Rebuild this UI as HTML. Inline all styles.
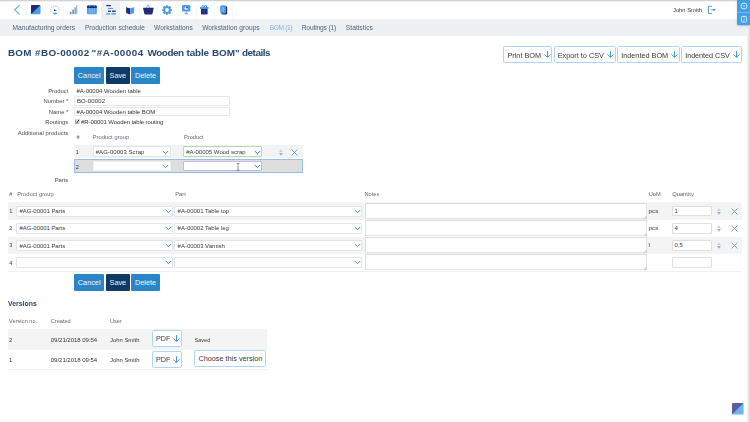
<!DOCTYPE html>
<html>
<head>
<meta charset="utf-8">
<style>
html,body{margin:0;padding:0;}
body{filter:blur(0.3px);width:750px;height:422px;overflow:hidden;background:#fff;position:relative;font-family:"Liberation Sans",sans-serif;color:#333;}
div{box-sizing:border-box;}
.abs{position:absolute;}
.t{position:absolute;white-space:nowrap;line-height:10px;height:10px;}
.btn{position:absolute;height:17px;color:#eef5fc;font-size:7.3px;line-height:17px;text-align:center;border-radius:1px;}
.bl{background:#2b86c8;}
.bd{background:#103a66;}
.obtn{position:absolute;height:17px;border:1px solid #aed5f3;border-radius:1.5px;background:#fff;}
.row{position:absolute;background:#f3f3f3;}
.sel{position:absolute;background:#fff;border:1px solid #d5dbe1;border-radius:1px;}
.ta{position:absolute;background:#fff;border:1px solid #e3e3e3;border-top-color:#dbdbdb;border-left-color:#dedede;}
svg{position:absolute;overflow:visible;}
</style>
</head>
<body>
<div class="abs" style="left:0;top:19.3px;width:750px;height:16.7px;background:#eef1f4"></div>
<div class="abs" style="left:101.3px;top:1px;width:19px;height:19px;background:#eef1f4"></div>
<div class="abs" style="left:0;top:0;width:750px;height:1px;background:#d3d3d3"></div>
<div class="abs" style="left:0;top:1px;width:750px;height:1px;background:#f3f3f3"></div>
<div class="abs" style="left:26.3px;top:2px;width:1px;height:17px;background:#f8f9fa"></div>
<div class="abs" style="left:45.3px;top:2px;width:1px;height:17px;background:#f8f9fa"></div>
<div class="abs" style="left:63.4px;top:2px;width:1px;height:17px;background:#f8f9fa"></div>
<div class="abs" style="left:82.2px;top:2px;width:1px;height:17px;background:#f8f9fa"></div>
<div class="abs" style="left:138.7px;top:2px;width:1px;height:17px;background:#f8f9fa"></div>
<div class="abs" style="left:157.3px;top:2px;width:1px;height:17px;background:#f8f9fa"></div>
<div class="abs" style="left:176.9px;top:2px;width:1px;height:17px;background:#f8f9fa"></div>
<div class="abs" style="left:195.5px;top:2px;width:1px;height:17px;background:#f8f9fa"></div>
<div class="abs" style="left:213.5px;top:2px;width:1px;height:17px;background:#f8f9fa"></div>
<div class="abs" style="left:232px;top:2px;width:1px;height:17px;background:#f8f9fa"></div>
<svg style="left:13px;top:4px" width="8" height="12" viewBox="0 0 8 12"><path d="M6.6 1.2 L1.6 5.8 L6.6 10.4" fill="none" stroke="#5fb0ee" stroke-width="1.1"/></svg>
<svg style="left:31px;top:5px" width="10" height="10" viewBox="0 0 10 10"><defs><clipPath id="lg"><rect x="0" y="0" width="9.5" height="9.3" rx="1.2"/></clipPath></defs><g clip-path="url(#lg)"><rect width="10" height="10" fill="#4a9de8"/><path d="M0 0 H9.5 L0 9.3 Z" fill="#232a7a"/></g></svg>
<svg style="left:49.6px;top:4.6px" width="10" height="10" viewBox="0 0 10 10"><path d="M0.9 6.6 A4.3 4.3 0 1 1 9.1 6.6" fill="none" stroke="#86bdf0" stroke-width="1.1" stroke-dasharray="0.9 1.0"/><path d="M2.5 7.8 H7.5 A2.6 2.2 0 0 1 2.5 7.8Z" fill="#4a9de8"/><path d="M4.0 4.3 L6.9 5.9 H4.0Z" fill="#232a7a"/></svg>
<svg style="left:69px;top:5px" width="9" height="10" viewBox="0 0 9 10"><rect x="0.8" y="6.8" width="1.8" height="2.4" fill="#8a8fa8"/><rect x="3.2" y="4.6" width="1.8" height="4.6" fill="#8f96b8"/><rect x="5.4" y="2.2" width="1.8" height="7" fill="#8fa4d0"/><rect x="7" y="0.2" width="1.4" height="9" fill="#9cc4ee"/></svg>
<svg style="left:87.3px;top:5.2px" width="10" height="10" viewBox="0 0 10 10"><rect x="0" y="0.6" width="9.8" height="8.6" rx="1" fill="#4a9de8"/><path d="M0 2.9 V1.6 A1 1 0 0 1 1 0.6 H8.8 A1 1 0 0 1 9.8 1.6 V2.9Z" fill="#232a7a"/><rect x="2" y="0" width="1.2" height="1.8" fill="#4a9de8"/><rect x="6.6" y="0" width="1.2" height="1.8" fill="#4a9de8"/><g stroke="#a9d3f8" stroke-width="0.6"><path d="M2.2 3.6V8.6M4 3.6V8.6M5.8 3.6V8.6M7.6 3.6V8.6"/></g></svg>
<svg style="left:106px;top:4px" width="11" height="12" viewBox="0 0 11 12"><rect x="0.3" y="1" width="4.6" height="1.2" fill="#232a7a"/><rect x="2" y="3.9" width="5" height="1.1" fill="#4a9de8"/><rect x="2" y="6.6" width="3" height="1.3" fill="#232a7a"/><rect x="6" y="6.6" width="3.8" height="1.3" fill="#232a7a"/><rect x="0.3" y="9.2" width="3.8" height="1.4" fill="#4a9de8"/><rect x="5.4" y="9.2" width="4.4" height="1.4" fill="#4a9de8"/></svg>
<svg style="left:125.5px;top:6px" width="9" height="9" viewBox="0 0 9 9"><path d="M0.1 1 L4.1 2.3 V8.5 L0.1 6.9Z" fill="#232a7a"/><path d="M8.1 1 L4.1 2.3 V8.5 L8.1 6.9Z" fill="#4a9de8"/><path d="M0.1 1 L4.1 -0.1 L8.1 1 L4.1 2.3Z" fill="#f3f6fb"/></svg>
<svg style="left:143.3px;top:4.4px" width="11" height="11" viewBox="0 0 11 11"><path d="M3.2 4.2 L5.2 0.9 L7.2 4.2" fill="none" stroke="#4a9de8" stroke-width="0.8"/><path d="M0.5 3.7 H10.3 Q10.8 3.7 10.7 4.3 L9.5 9.4 Q9.3 10.4 8.3 10.4 H2.5 Q1.5 10.4 1.3 9.4 L0.1 4.3 Q0 3.7 0.5 3.7Z" fill="#232a7a"/></svg>
<svg style="left:162px;top:5px" width="10" height="10" viewBox="-5 -5 10 10"><circle r="3.7" fill="#4a9de8"/><rect x="-1.1" y="-4.8" width="2.2" height="2.2" rx="0.4" transform="rotate(0)" fill="#4a9de8"/><rect x="-1.1" y="-4.8" width="2.2" height="2.2" rx="0.4" transform="rotate(45)" fill="#4a9de8"/><rect x="-1.1" y="-4.8" width="2.2" height="2.2" rx="0.4" transform="rotate(90)" fill="#4a9de8"/><rect x="-1.1" y="-4.8" width="2.2" height="2.2" rx="0.4" transform="rotate(135)" fill="#4a9de8"/><rect x="-1.1" y="-4.8" width="2.2" height="2.2" rx="0.4" transform="rotate(180)" fill="#4a9de8"/><rect x="-1.1" y="-4.8" width="2.2" height="2.2" rx="0.4" transform="rotate(225)" fill="#4a9de8"/><rect x="-1.1" y="-4.8" width="2.2" height="2.2" rx="0.4" transform="rotate(270)" fill="#4a9de8"/><rect x="-1.1" y="-4.8" width="2.2" height="2.2" rx="0.4" transform="rotate(315)" fill="#4a9de8"/><circle r="1.9" fill="#fff"/></svg>
<svg style="left:181.6px;top:5.2px" width="9" height="10" viewBox="0 0 9 10"><rect x="0" y="0" width="8.4" height="6.6" rx="0.8" fill="#4a9de8"/><rect x="3.8" y="6.6" width="0.9" height="2" fill="#4a9de8"/><rect x="2.4" y="8.5" width="3.6" height="0.7" fill="#4a6cc0"/><circle cx="4.25" cy="3.2" r="1.7" fill="#f7efc0"/><path d="M4.25 3.2 V1.5 A1.7 1.7 0 0 1 5.95 3.2Z" fill="#232a7a"/></svg>
<svg style="left:200.4px;top:5px" width="9" height="10" viewBox="0 0 9 10"><path d="M4.3 2.3 C3.9 -0.2 1.6 -0.2 2.1 2.3 M4.3 2.3 C4.7 -0.2 7 -0.2 6.5 2.3" fill="none" stroke="#4a9de8" stroke-width="1.05"/><rect x="0" y="2" width="8.6" height="1.9" rx="0.3" fill="#4a9de8"/><rect x="1" y="3.9" width="6.6" height="5.5" fill="#232a7a"/><rect x="3.8" y="3.9" width="1" height="5.5" fill="#36429a"/></svg>
<svg style="left:220px;top:5px" width="8" height="10" viewBox="0 0 8 10"><rect x="1.4" y="1" width="5.8" height="8.4" rx="1.5" fill="#232a7a"/><rect x="0.2" y="0.2" width="5.8" height="8.4" rx="1.5" fill="#4a9de8"/><path d="M3.1 2.2 V6.6 M2.3 3.2 H3.9 M2.3 5.4 H3.9" stroke="#a6d0f8" stroke-width="0.55" fill="none"/></svg>
<div class="t" style="left:673px;top:5.00px;font-size:5.8px;color:#333;letter-spacing:0.000px;--k:5.8;">John Smith</div>
<svg style="left:707px;top:5px" width="10" height="10" viewBox="0 0 10 10"><path d="M5 1.3 H1.5 V8.5 H5" fill="none" stroke="#4a82c4" stroke-width="0.85"/><path d="M4.2 4.8 H7.4" stroke="#4a82c4" stroke-width="0.9"/><path d="M6.6 3.4 L8.7 4.8 L6.6 6.2Z" fill="#4a82c4"/></svg>
<div class="abs" style="left:737px;top:0;width:13px;height:25.2px;background:#3fa0e8;border-radius:0 0 0 1.5px;box-shadow:0 1px 2px rgba(0,0,0,0.22)"></div>
<div class="abs" style="left:737px;top:11.9px;width:13px;height:0.8px;background:#6cb8f0"></div>
<svg style="left:739.6px;top:1.7px" width="8" height="8" viewBox="0 0 8 8"><circle cx="4" cy="4" r="3" fill="none" stroke="#d8ecfc" stroke-width="0.95"/><path d="M3.6 2.8 L5 4 L3.6 5.2Z" fill="#d8ecfc"/></svg>
<svg style="left:739.6px;top:14.8px" width="8" height="8" viewBox="0 0 8 8"><rect x="1.4" y="1.4" width="5.2" height="5.6" rx="0.9" fill="none" stroke="#d8ecfc" stroke-width="0.95"/><path d="M2.9 2 H5.1" stroke="#d8ecfc" stroke-width="0.9"/><path d="M3 4.7 L3.8 5.4 L5.1 3.9" stroke="#d8ecfc" stroke-width="0.7" fill="none"/></svg>
<div class="abs" style="left:747.4px;top:26px;width:2.6px;height:396px;background:linear-gradient(90deg,#f8f8f8,#d4d4d4)"></div>
<div class="t" style="left:12.6px;top:23.30px;font-size:6.6px;color:#50607a;letter-spacing:0.009px;--k:6.6;">Manufacturing orders</div>
<div class="t" style="left:84.9px;top:23.30px;font-size:6.6px;color:#50607a;letter-spacing:0.013px;--k:6.6;">Production schedule</div>
<div class="t" style="left:154px;top:23.30px;font-size:6.6px;color:#50607a;letter-spacing:0.083px;--k:6.6;">Workstations</div>
<div class="t" style="left:202.2px;top:23.30px;font-size:6.6px;color:#50607a;letter-spacing:0.045px;--k:6.6;">Workstation groups</div>
<div class="t" style="left:269.8px;top:23.30px;font-size:6.6px;color:#7fb3e3;letter-spacing:-0.375px;--k:6.6;">BOM (1)</div>
<div class="t" style="left:301.7px;top:23.30px;font-size:6.6px;color:#50607a;letter-spacing:-0.118px;--k:6.6;">Routings (1)</div>
<div class="t" style="left:345.8px;top:23.30px;font-size:6.6px;color:#50607a;letter-spacing:0.071px;--k:6.6;">Statistics</div>
<div class="t" style="left:8px;top:48.40px;font-size:9.9px;color:#28486f;letter-spacing:0.184px;--k:9.9;font-weight:bold;transform:scaleY(0.93);transform-origin:0 55%;">BOM</div>
<div class="t" style="left:35px;top:48.40px;font-size:9.9px;color:#28486f;letter-spacing:0.393px;--k:9.9;font-weight:bold;transform:scaleY(0.93);transform-origin:0 55%;">#BO-00002</div>
<div class="t" style="left:91.6px;top:48.40px;font-size:9.9px;color:#28486f;letter-spacing:0.438px;--k:9.9;font-weight:bold;transform:scaleY(0.93);transform-origin:0 55%;">&quot;#A-00004</div>
<div class="t" style="left:147.6px;top:48.40px;font-size:9.9px;color:#28486f;letter-spacing:-0.461px;--k:9.9;font-weight:bold;transform:scaleY(0.93);transform-origin:0 55%;">Wooden</div>
<div class="t" style="left:186.6px;top:48.40px;font-size:9.9px;color:#28486f;letter-spacing:-0.133px;--k:9.9;font-weight:bold;transform:scaleY(0.93);transform-origin:0 55%;">table</div>
<div class="t" style="left:212px;top:48.40px;font-size:9.9px;color:#28486f;letter-spacing:-0.034px;--k:9.9;font-weight:bold;transform:scaleY(0.93);transform-origin:0 55%;">BOM&quot;</div>
<div class="t" style="left:242px;top:48.40px;font-size:9.9px;color:#28486f;letter-spacing:-0.471px;--k:9.9;font-weight:bold;transform:scaleY(0.93);transform-origin:0 55%;">details</div>
<div class="obtn" style="left:503.3px;top:46px;width:49.2px"></div>
<div class="t" style="left:507.5px;top:50.50px;font-size:7.3px;color:#3a3a3a;letter-spacing:-0.017px;--k:7.3;">Print BOM</div>
<svg style="left:543.8px;top:51.3px" width="7" height="7" viewBox="0 0 7 7"><path d="M3.5 0.1 V6.3 M0.5 3.4 L3.5 6.4 L6.5 3.4" fill="none" stroke="#3f98e4" stroke-width="1"/></svg>
<div class="obtn" style="left:553.9px;top:46px;width:61.9px"></div>
<div class="t" style="left:557.7px;top:50.50px;font-size:7.3px;color:#3a3a3a;letter-spacing:-0.003px;--k:7.3;">Export to CSV</div>
<svg style="left:606.8px;top:51.3px" width="7" height="7" viewBox="0 0 7 7"><path d="M3.5 0.1 V6.3 M0.5 3.4 L3.5 6.4 L6.5 3.4" fill="none" stroke="#3f98e4" stroke-width="1"/></svg>
<div class="obtn" style="left:617.1px;top:46px;width:62.9px"></div>
<div class="t" style="left:621.2px;top:50.50px;font-size:7.3px;color:#3a3a3a;letter-spacing:-0.005px;--k:7.3;">Indented BOM</div>
<svg style="left:671.1px;top:51.3px" width="7" height="7" viewBox="0 0 7 7"><path d="M3.5 0.1 V6.3 M0.5 3.4 L3.5 6.4 L6.5 3.4" fill="none" stroke="#3f98e4" stroke-width="1"/></svg>
<div class="obtn" style="left:681.3px;top:46px;width:61.2px"></div>
<div class="t" style="left:685.2px;top:50.50px;font-size:7.3px;color:#3a3a3a;letter-spacing:-0.070px;--k:7.3;">Indented CSV</div>
<svg style="left:733.1px;top:51.3px" width="7" height="7" viewBox="0 0 7 7"><path d="M3.5 0.1 V6.3 M0.5 3.4 L3.5 6.4 L6.5 3.4" fill="none" stroke="#3f98e4" stroke-width="1"/></svg>
<div class="btn bl" style="left:74.2px;top:67px;width:30px">Cancel</div>
<div class="btn bd" style="left:105.9px;top:67px;width:23.9px">Save</div>
<div class="btn bl" style="left:131.1px;top:67px;width:28.8px">Delete</div>
<div class="btn bl" style="left:74.2px;top:274px;width:30px">Cancel</div>
<div class="btn bd" style="left:105.9px;top:274px;width:23.9px">Save</div>
<div class="btn bl" style="left:131.1px;top:274px;width:28.8px">Delete</div>
<div class="t" style="left:8.3px;top:85.80px;font-size:5.85px;color:#4a4a4a;--k:5.85;width:60px;text-align:right;">Product</div>
<div class="t" style="left:8.3px;top:96.20px;font-size:5.85px;color:#4a4a4a;--k:5.85;width:60px;text-align:right;">Number *</div>
<div class="t" style="left:8.3px;top:106.70px;font-size:5.85px;color:#4a4a4a;--k:5.85;width:60px;text-align:right;">Name *</div>
<div class="t" style="left:8.3px;top:117.40px;font-size:5.85px;color:#4a4a4a;--k:5.85;width:60px;text-align:right;">Routings</div>
<div class="t" style="left:8.3px;top:127.60px;font-size:5.85px;color:#4a4a4a;letter-spacing:0.041px;--k:5.85;width:60px;text-align:right;">Additional products</div>
<div class="t" style="left:8.3px;top:174.70px;font-size:5.85px;color:#4a4a4a;--k:5.85;width:60px;text-align:right;">Parts</div>
<div class="t" style="left:76.4px;top:85.80px;font-size:6px;color:#333;letter-spacing:-0.010px;--k:6;">#A-00004 Wooden table</div>
<div class="sel" style="left:74.2px;top:96.4px;width:156px;height:9.8px;border-color:#e7e7e7"></div>
<div class="sel" style="left:74.2px;top:107px;width:156px;height:9.4px;border-color:#e7e7e7"></div>
<div class="t" style="left:76.9px;top:96.30px;font-size:6px;color:#333;letter-spacing:0.105px;--k:6;">BO-00002</div>
<div class="t" style="left:76.6px;top:106.80px;font-size:6px;color:#333;letter-spacing:-0.050px;--k:6;">#A-00004 Wooden table BOM</div>
<svg style="left:74.6px;top:118.8px" width="6" height="6" viewBox="0 0 6 6"><rect x="0.5" y="1" width="3.4" height="3.4" fill="#fff" stroke="#666" stroke-width="0.5"/><path d="M1 2.6 L2 3.7 L4.1 0.7" fill="none" stroke="#222" stroke-width="0.9"/></svg>
<div class="t" style="left:81px;top:117.40px;font-size:6px;color:#333;letter-spacing:-0.091px;--k:6;">#R-00001 Wooden table routing</div>
<div class="t" style="left:76.5px;top:132.00px;font-size:5.6px;color:#5a6778;--k:5.6;">#</div>
<div class="t" style="left:92.7px;top:132.00px;font-size:5.7px;color:#5a6778;letter-spacing:0.067px;--k:5.7;">Product group</div>
<div class="t" style="left:184px;top:132.00px;font-size:5.7px;color:#5a6778;--k:5.7;">Product</div>
<div class="row" style="left:74px;top:145.3px;width:228.5px;height:12.9px;background:#f3f3f3"></div>
<div class="row" style="left:73.7px;top:159.2px;width:229px;height:13.4px;background:#dedede;border:1px solid #95c0e4"></div>
<div class="t" style="left:75.8px;top:147.40px;font-size:5.6px;color:#333;--k:5.6;">1</div>
<div class="t" style="left:75.8px;top:161.60px;font-size:5.6px;color:#333;--k:5.6;">2</div>
<div class="sel" style="left:92.5px;top:146.4px;width:78.3px;height:10.7px;border-color:#e1e4e8"></div>
<div class="t" style="left:95.7px;top:147.15px;font-size:6px;color:#3a3a3a;letter-spacing:0.051px;--k:6;">#AG-00003 Scrap</div>
<svg style="left:162.3px;top:149.5px" width="7" height="5" viewBox="0 0 7 5"><path d="M0.8 1 L3.5 3.7 L6.2 1" fill="none" stroke="#3484c9" stroke-width="0.98"/></svg>
<div class="sel" style="left:183px;top:146.4px;width:79.2px;height:10.7px;border-color:#b3dcad"></div>
<div class="t" style="left:186.2px;top:147.15px;font-size:6px;color:#3a3a3a;letter-spacing:-0.005px;--k:6;">#A-00005 Wood scrap</div>
<svg style="left:253.5px;top:149.5px" width="7" height="5" viewBox="0 0 7 5"><path d="M0.8 1 L3.5 3.7 L6.2 1" fill="none" stroke="#3484c9" stroke-width="0.98"/></svg>
<div class="sel" style="left:92.5px;top:160.6px;width:78.3px;height:10.4px;border-color:#f0f0f0"></div>
<svg style="left:162.3px;top:163.5px" width="7" height="5" viewBox="0 0 7 5"><path d="M0.8 1 L3.5 3.7 L6.2 1" fill="none" stroke="#3484c9" stroke-width="0.98"/></svg>
<div class="sel" style="left:183px;top:160.5px;width:79.2px;height:10.8px;border-color:#bfb8ee"></div>
<svg style="left:253.5px;top:163.5px" width="7" height="5" viewBox="0 0 7 5"><path d="M0.8 1 L3.5 3.7 L6.2 1" fill="none" stroke="#3484c9" stroke-width="0.98"/></svg>
<svg style="left:236.3px;top:162.8px" width="4" height="8" viewBox="0 0 4 8"><path d="M0.6 0.5 H3.4 M2 0.5 V7.3 M0.6 7.3 H3.4" stroke="#555" stroke-width="0.6" fill="none"/></svg>
<svg style="left:278.8px;top:148.7px" width="4" height="7" viewBox="0 0 4 7"><path d="M0 2.9 L2 0.3 L4 2.9Z" fill="#bcd3ea"/><path d="M0 4.1 L2 6.7 L4 4.1Z" fill="#8db6df"/></svg>
<svg style="left:291.1px;top:148.9px" width="7" height="7" viewBox="0 0 7 7"><path d="M0.5 0.5 L6.5 6.5 M6.5 0.5 L0.5 6.5" stroke="#5598d5" stroke-width="0.85" fill="none"/></svg>
<div class="t" style="left:9.2px;top:189.20px;font-size:5.6px;color:#5a6778;--k:5.6;">#</div>
<div class="t" style="left:17.2px;top:189.20px;font-size:5.7px;color:#5a6778;letter-spacing:0.067px;--k:5.7;">Product group</div>
<div class="t" style="left:175.3px;top:189.20px;font-size:5.7px;color:#5a6778;--k:5.7;">Part</div>
<div class="t" style="left:364.5px;top:189.20px;font-size:5.7px;color:#5a6778;--k:5.7;">Notes</div>
<div class="t" style="left:648.7px;top:189.20px;font-size:5.7px;color:#5a6778;--k:5.7;">UoM</div>
<div class="t" style="left:672.2px;top:189.20px;font-size:5.7px;color:#5a6778;letter-spacing:0.052px;--k:5.7;">Quantity</div>
<div class="row" style="left:8px;top:202.4px;width:734.4px;height:17.6px;background:#f4f4f4"></div>
<div class="t" style="left:9.2px;top:206.20px;font-size:5.6px;color:#3a3a3a;--k:5.6;">1</div>
<div class="sel" style="left:16.4px;top:205.8px;width:156.4px;height:11.2px;border-color:#e1e4e8"></div>
<div class="t" style="left:19.6px;top:206.30px;font-size:6px;color:#3a3a3a;letter-spacing:-0.057px;--k:6;">#AG-00001 Parts</div>
<svg style="left:164.7px;top:208.9px" width="7" height="5" viewBox="0 0 7 5"><path d="M0.8 1 L3.5 3.7 L6.2 1" fill="none" stroke="#3484c9" stroke-width="0.98"/></svg>
<div class="sel" style="left:174.2px;top:205.8px;width:188.2px;height:11.2px;border-color:#e1e4e8"></div>
<div class="t" style="left:177.6px;top:206.30px;font-size:6px;color:#3a3a3a;letter-spacing:-0.019px;--k:6;">#A-00001 Table top</div>
<svg style="left:354.0px;top:208.9px" width="7" height="5" viewBox="0 0 7 5"><path d="M0.8 1 L3.5 3.7 L6.2 1" fill="none" stroke="#3484c9" stroke-width="0.98"/></svg>
<div class="ta" style="left:364.5px;top:203.0px;width:282.4px;height:15.5px"></div>
<svg style="left:642.6px;top:214.8px" width="4" height="4" viewBox="0 0 4 4"><path d="M3.7 0.3 L0.3 3.7 L3.7 3.7Z" fill="#cfcfcf"/></svg>
<div class="t" style="left:648.6px;top:205.90px;font-size:6.2px;color:#3a3a3a;--k:6.2;">pcs</div>
<div class="sel" style="left:671.6px;top:205.6px;width:40.2px;height:10.9px;border-color:#dfdfdf"></div>
<div class="t" style="left:674.6px;top:205.95px;font-size:6px;color:#3a3a3a;--k:6;">1</div>
<svg style="left:717.4px;top:207.5px" width="4" height="7" viewBox="0 0 4 7"><path d="M0 2.9 L2 0.3 L4 2.9Z" fill="#bcd3ea"/><path d="M0 4.1 L2 6.7 L4 4.1Z" fill="#8db6df"/></svg>
<svg style="left:731.0px;top:207.5px" width="7" height="7" viewBox="0 0 7 7"><path d="M0.5 0.5 L6.5 6.5 M6.5 0.5 L0.5 6.5" stroke="#5598d5" stroke-width="0.85" fill="none"/></svg>
<div class="t" style="left:9.2px;top:223.30px;font-size:5.6px;color:#3a3a3a;--k:5.6;">2</div>
<div class="sel" style="left:16.4px;top:222.9px;width:156.4px;height:11.2px;border-color:#e1e4e8"></div>
<div class="t" style="left:19.6px;top:223.40px;font-size:6px;color:#3a3a3a;letter-spacing:-0.057px;--k:6;">#AG-00001 Parts</div>
<svg style="left:164.7px;top:226.0px" width="7" height="5" viewBox="0 0 7 5"><path d="M0.8 1 L3.5 3.7 L6.2 1" fill="none" stroke="#3484c9" stroke-width="0.98"/></svg>
<div class="sel" style="left:174.2px;top:222.9px;width:188.2px;height:11.2px;border-color:#e1e4e8"></div>
<div class="t" style="left:177.6px;top:223.40px;font-size:6px;color:#3a3a3a;letter-spacing:-0.017px;--k:6;">#A-00002 Table leg</div>
<svg style="left:354.0px;top:226.0px" width="7" height="5" viewBox="0 0 7 5"><path d="M0.8 1 L3.5 3.7 L6.2 1" fill="none" stroke="#3484c9" stroke-width="0.98"/></svg>
<div class="ta" style="left:364.5px;top:220.1px;width:282.4px;height:15.5px"></div>
<svg style="left:642.6px;top:231.9px" width="4" height="4" viewBox="0 0 4 4"><path d="M3.7 0.3 L0.3 3.7 L3.7 3.7Z" fill="#cfcfcf"/></svg>
<div class="t" style="left:648.6px;top:223.00px;font-size:6.2px;color:#3a3a3a;--k:6.2;">pcs</div>
<div class="sel" style="left:671.6px;top:222.7px;width:40.2px;height:10.9px;border-color:#dfdfdf"></div>
<div class="t" style="left:674.6px;top:223.05px;font-size:6px;color:#3a3a3a;--k:6;">4</div>
<svg style="left:717.4px;top:224.6px" width="4" height="7" viewBox="0 0 4 7"><path d="M0 2.9 L2 0.3 L4 2.9Z" fill="#bcd3ea"/><path d="M0 4.1 L2 6.7 L4 4.1Z" fill="#8db6df"/></svg>
<svg style="left:731.0px;top:224.6px" width="7" height="7" viewBox="0 0 7 7"><path d="M0.5 0.5 L6.5 6.5 M6.5 0.5 L0.5 6.5" stroke="#5598d5" stroke-width="0.85" fill="none"/></svg>
<div class="row" style="left:8px;top:236.6px;width:734.4px;height:17.6px;background:#f4f4f4"></div>
<div class="t" style="left:9.2px;top:240.40px;font-size:5.6px;color:#3a3a3a;--k:5.6;">3</div>
<div class="sel" style="left:16.4px;top:240.00000000000003px;width:156.4px;height:11.2px;border-color:#e1e4e8"></div>
<div class="t" style="left:19.6px;top:240.50px;font-size:6px;color:#3a3a3a;letter-spacing:-0.057px;--k:6;">#AG-00001 Parts</div>
<svg style="left:164.7px;top:243.1px" width="7" height="5" viewBox="0 0 7 5"><path d="M0.8 1 L3.5 3.7 L6.2 1" fill="none" stroke="#3484c9" stroke-width="0.98"/></svg>
<div class="sel" style="left:174.2px;top:240.00000000000003px;width:188.2px;height:11.2px;border-color:#e1e4e8"></div>
<div class="t" style="left:177.6px;top:240.50px;font-size:6px;color:#3a3a3a;letter-spacing:-0.018px;--k:6;">#A-00003 Varnish</div>
<svg style="left:354.0px;top:243.1px" width="7" height="5" viewBox="0 0 7 5"><path d="M0.8 1 L3.5 3.7 L6.2 1" fill="none" stroke="#3484c9" stroke-width="0.98"/></svg>
<div class="ta" style="left:364.5px;top:237.2px;width:282.4px;height:15.5px"></div>
<svg style="left:642.6px;top:249.0px" width="4" height="4" viewBox="0 0 4 4"><path d="M3.7 0.3 L0.3 3.7 L3.7 3.7Z" fill="#cfcfcf"/></svg>
<div class="t" style="left:648.6px;top:240.10px;font-size:6.2px;color:#3a3a3a;--k:6.2;">l</div>
<div class="sel" style="left:671.6px;top:239.8px;width:40.2px;height:10.9px;border-color:#dfdfdf"></div>
<div class="t" style="left:674.6px;top:240.15px;font-size:6px;color:#3a3a3a;--k:6;">0,5</div>
<svg style="left:717.4px;top:241.7px" width="4" height="7" viewBox="0 0 4 7"><path d="M0 2.9 L2 0.3 L4 2.9Z" fill="#bcd3ea"/><path d="M0 4.1 L2 6.7 L4 4.1Z" fill="#8db6df"/></svg>
<svg style="left:731.0px;top:241.7px" width="7" height="7" viewBox="0 0 7 7"><path d="M0.5 0.5 L6.5 6.5 M6.5 0.5 L0.5 6.5" stroke="#5598d5" stroke-width="0.85" fill="none"/></svg>
<div class="t" style="left:9.2px;top:257.50px;font-size:5.6px;color:#3a3a3a;--k:5.6;">4</div>
<div class="sel" style="left:16.4px;top:257.1px;width:156.4px;height:11.2px;border-color:#e1e4e8"></div>
<svg style="left:164.7px;top:260.2px" width="7" height="5" viewBox="0 0 7 5"><path d="M0.8 1 L3.5 3.7 L6.2 1" fill="none" stroke="#3484c9" stroke-width="0.98"/></svg>
<div class="sel" style="left:174.2px;top:257.1px;width:188.2px;height:11.2px;border-color:#e1e4e8"></div>
<svg style="left:354.0px;top:260.2px" width="7" height="5" viewBox="0 0 7 5"><path d="M0.8 1 L3.5 3.7 L6.2 1" fill="none" stroke="#3484c9" stroke-width="0.98"/></svg>
<div class="ta" style="left:364.5px;top:254.3px;width:282.4px;height:15.5px"></div>
<svg style="left:642.6px;top:266.1px" width="4" height="4" viewBox="0 0 4 4"><path d="M3.7 0.3 L0.3 3.7 L3.7 3.7Z" fill="#cfcfcf"/></svg>
<div class="sel" style="left:671.6px;top:256.90000000000003px;width:40.2px;height:10.9px;border-color:#dfdfdf"></div>
<div class="abs" style="left:8px;top:271.3px;width:734.4px;height:1px;background:#f1f1f1"></div>
<div class="t" style="left:8px;top:299.40px;font-size:6.9px;color:#26466e;--k:6.9;font-weight:bold;">Versions</div>
<div class="t" style="left:9.1px;top:315.90px;font-size:5.6px;color:#5a6778;--k:5.6;">Version no.</div>
<div class="t" style="left:50.8px;top:315.90px;font-size:5.6px;color:#5a6778;--k:5.6;">Created</div>
<div class="t" style="left:110px;top:315.90px;font-size:5.6px;color:#5a6778;--k:5.6;">User</div>
<div class="row" style="left:8px;top:329.2px;width:259.4px;height:20.4px;background:#f4f4f4"></div>
<div class="abs" style="left:8px;top:369.4px;width:259.4px;height:1px;background:#f0f0f0"></div>
<div class="t" style="left:9.1px;top:334.50px;font-size:5.6px;color:#333;--k:5.6;">2</div>
<div class="t" style="left:50.8px;top:334.50px;font-size:6px;color:#333;letter-spacing:-0.020px;--k:6;">09/21/2018 09:54</div>
<div class="t" style="left:110px;top:334.50px;font-size:5.9px;color:#333;letter-spacing:-0.007px;--k:5.9;">John Smith</div>
<div class="obtn" style="left:152px;top:330.4px;width:29.6px;height:17px"></div>
<div class="t" style="left:156px;top:334.10px;font-size:7.2px;color:#3a3a3a;--k:7.2;">PDF</div>
<svg style="left:172.7px;top:335.2px" width="7" height="7" viewBox="0 0 7 7"><path d="M3.5 0.1 V6.3 M0.5 3.4 L3.5 6.4 L6.5 3.4" fill="none" stroke="#3f98e4" stroke-width="1"/></svg>
<div class="t" style="left:9.1px;top:354.90px;font-size:5.6px;color:#333;--k:5.6;">1</div>
<div class="t" style="left:50.8px;top:354.90px;font-size:6px;color:#333;letter-spacing:-0.020px;--k:6;">09/21/2018 09:54</div>
<div class="t" style="left:110px;top:354.90px;font-size:5.9px;color:#333;letter-spacing:-0.007px;--k:5.9;">John Smith</div>
<div class="obtn" style="left:152px;top:350.8px;width:29.6px;height:17px"></div>
<div class="t" style="left:156px;top:354.50px;font-size:7.2px;color:#3a3a3a;--k:7.2;">PDF</div>
<svg style="left:172.7px;top:355.6px" width="7" height="7" viewBox="0 0 7 7"><path d="M3.5 0.1 V6.3 M0.5 3.4 L3.5 6.4 L6.5 3.4" fill="none" stroke="#3f98e4" stroke-width="1"/></svg>
<div class="t" style="left:194.6px;top:334.60px;font-size:5.5px;color:#333;--k:5.5;">Saved</div>
<div class="obtn" style="left:194.4px;top:350.4px;width:72px;height:17px"></div>
<div class="t" style="left:198.4px;top:354.20px;font-size:7.3px;color:#3a3a3a;letter-spacing:-0.005px;--k:7.3;">Choose this version</div>
<svg style="left:731.5px;top:403px" width="12" height="12" viewBox="0 0 12 12"><defs><clipPath id="lg2"><rect x="0" y="0" width="11.6" height="11.6" rx="1.2"/></clipPath></defs><g clip-path="url(#lg2)"><rect width="12" height="12" fill="#6cb4ea"/><path d="M0 0 H11.6 L0 11.6 Z" fill="#585e9e"/></g></svg>
</body>
</html>
